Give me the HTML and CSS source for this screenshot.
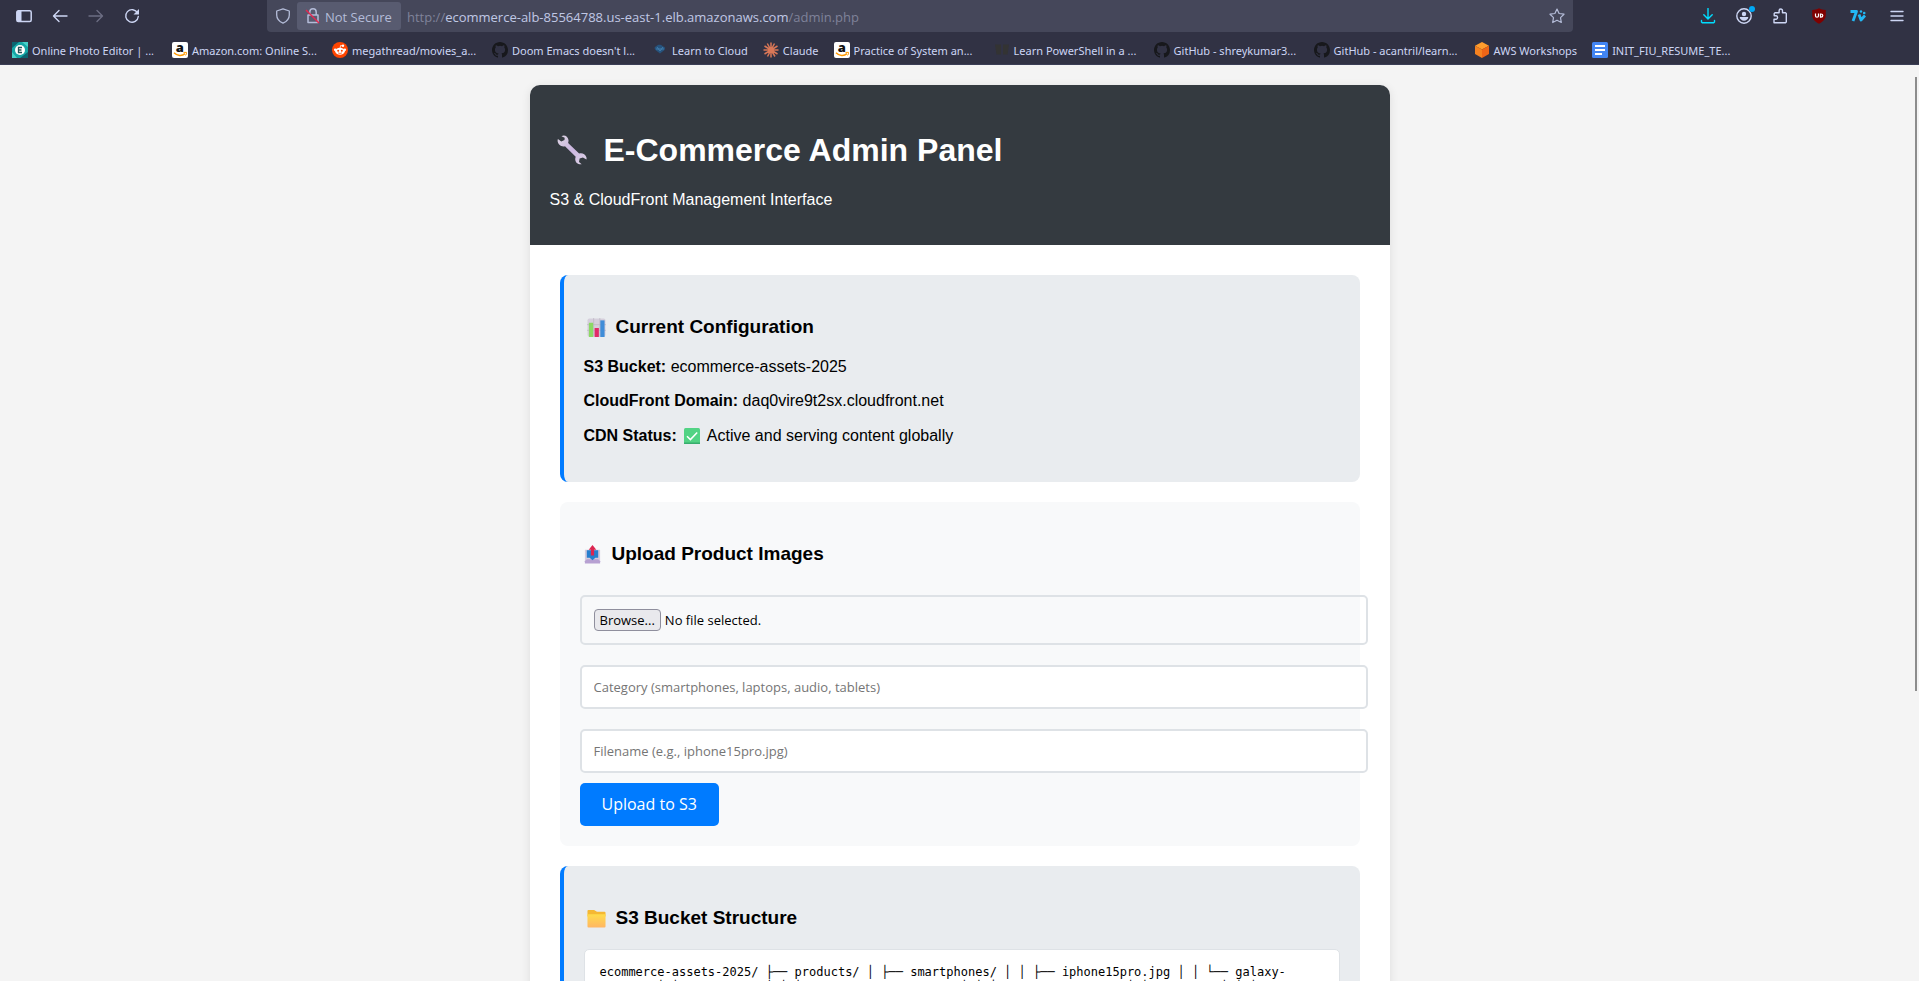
FILE: index.html
```html
<!DOCTYPE html>
<html lang="en">
<head>
<meta charset="utf-8">
<title>E-Commerce Admin Panel</title>
<link rel="stylesheet" href="styles.css">
</head>
<body>
<svg class="defs" aria-hidden="true">
  <defs>
    <symbol id="github" viewBox="0 0 16 16"><path fill="#17181c" d="M8 0C3.58 0 0 3.58 0 8c0 3.54 2.29 6.53 5.47 7.59.4.07.55-.17.55-.38 0-.19-.01-.82-.01-1.49-2.01.37-2.53-.49-2.69-.94-.09-.23-.48-.94-.82-1.13-.28-.15-.68-.52-.01-.53.63-.01 1.08.58 1.23.82.72 1.21 1.87.87 2.33.66.07-.52.28-.87.51-1.07-1.78-.2-3.64-.89-3.64-3.95 0-.87.31-1.59.82-2.15-.08-.2-.36-1.02.08-2.12 0 0 .67-.21 2.2.82a7.42 7.42 0 0 1 4 0c1.53-1.04 2.2-.82 2.2-.82.44 1.1.16 1.92.08 2.12.51.56.82 1.27.82 2.15 0 3.07-1.87 3.75-3.65 3.95.29.25.54.73.54 1.48 0 1.07-.01 1.93-.01 2.2 0 .21.15.46.55.38A8.01 8.01 0 0 0 16 8c0-4.42-3.58-8-8-8z"/></symbol>
    <symbol id="amazon" viewBox="0 0 16 16"><rect width="16" height="16" rx="2" fill="#fff"/><text x="7.7" y="10.2" text-anchor="middle" font-family="Open Sans" font-weight="800" font-size="13" fill="#111">a</text><path d="M2 10.800c3.200 3.200 8 3.500 11 .8" fill="none" stroke="#f90" stroke-width="1.500"/><path d="M11.500 10.400h3c.2 1-.2 2.200-.9 3" fill="none" stroke="#f90"/></symbol>
  </defs>
</svg>
<header class="browser">
  <nav class="toolbar" aria-label="Browser toolbar">
    <div class="nav-buttons">
      <button class="icon-button" aria-label="Sidebar"><svg viewBox="0 0 16 16"><rect x=".8" y="2.800" width="14.400" height="10.800" rx="1.500" fill="none" stroke="currentColor" stroke-width="1.500"/><path d="M1 3h4.500v10.500H1z" fill="currentColor"/></svg></button>
      <button class="icon-button" aria-label="Back"><svg viewBox="0 0 16 16"><path d="M15 8H2M7 2.500 1.500 8 7 13.500" class="line"/></svg></button>
      <button class="icon-button dim" aria-label="Forward"><svg viewBox="0 0 16 16"><path d="M1 8h13M9 2.500 14.500 8 9 13.500" class="line"/></svg></button>
      <button class="icon-button" aria-label="Reload"><svg viewBox="0 0 16 16"><path d="M13.600 5A6.300 6.300 0 1 0 14.300 8.500" class="line"/><path d="M15 1v5.500H9.500z" fill="currentColor"/></svg></button>
    </div>
    <div class="address">
      <button class="icon-button shield" aria-label="Tracking protection"><svg viewBox="0 0 16 16"><path d="M8 .8 14.300 3v4c0 4-2.500 6.500-6.300 8.200C4.200 13.500 1.700 11 1.700 7V3z" fill="none" stroke="currentColor" stroke-width="1.300" stroke-linejoin="round"/></svg></button>
      <button class="security"><svg viewBox="0 0 16 16"><path d="M3 7h10v7.500H3zM4.800 7V4a3.200 3.200 0 0 1 6.400 0v3" fill="none" stroke="currentColor" stroke-width="1.500" stroke-linejoin="round"/><path d="m1 2 13 13" stroke="#e22850" stroke-width="1.500"/></svg><span>Not Secure</span></button>
      <a class="url" href="#"><span>http://</span>ecommerce-alb-85564788.us-east-1.elb.amazonaws.com<span>/admin.php</span></a>
      <button class="icon-button star" aria-label="Bookmark this page"><svg viewBox="0 0 16 16"><path d="m8 1 2.100 4.500 4.900.7-3.500 3.400.8 4.900L8 12.200l-4.300 2.300.8-4.900L1 6.200l4.900-.7z" fill="none" stroke="currentColor" stroke-width="1.200" stroke-linejoin="round"/></svg></button>
    </div>
    <div class="tools">
      <button class="icon-button download" aria-label="Downloads"><svg viewBox="0 0 16 16"><path d="M8 .5v10M3.800 6.800 8 11l4.200-4.200M1.500 12.500V14l.8.800h11.400l.8-.8v-1.500" class="line"/></svg></button>
      <button class="icon-button account" aria-label="Account"><svg viewBox="0 0 16 16"><circle cx="8" cy="8" r="7.200" class="line"/><circle cx="8" cy="6" r="2.200" fill="currentColor"/><path d="M3.700 9h8.600c0 2-2 3.700-4.300 3.700S3.700 11 3.700 9z" fill="currentColor"/></svg><i class="dot"></i></button>
      <button class="icon-button" aria-label="Extensions"><svg viewBox="0 0 16 16"><path d="M2 14.800h11.500l.8-.8V5.500l-.8-.7h-3V2.700a1.700 1.700 0 0 0-3.400 0v2.100H3l-.8.700v2.300h2a1.800 1.800 0 0 1 0 3.500H2z" class="line"/></svg></button>
      <button class="icon-button addon" aria-label="uBlock"><svg viewBox="0 0 16 16"><path d="M8 .2c2 1 4 1.700 6.800 1.800v4.700c0 4.200-2.500 6.800-6.800 9C3.700 13.500 1.200 10.900 1.200 6.700V2C4 1.900 6 1.200 8 .2z" fill="#800000"/><path d="M4.500 5.500V8c0 1.600 3 1.600 3 0V5.500M9.500 6h.5c2.400 0 2.400 3.200 0 3.200h-.5z" fill="none" stroke="#fff" stroke-width="1.200"/></svg></button>
      <button class="icon-button addon" aria-label="7v extension"><svg viewBox="0 0 16 16"><path d="M.5 3.500h6L3 13M9 6.500l2 5.500 4-4.500" fill="none" stroke="#22b8f5" stroke-width="2.800" stroke-linejoin="round"/><circle cx="11" cy="3.500" r="1.200" fill="#22b8f5"/><circle cx="14.200" cy="5" r="1.300" fill="#22b8f5"/></svg></button>
      <button class="icon-button addon" aria-label="Menu"><svg viewBox="0 0 16 16"><path d="M2 3.500h12M2 8h12M2 12.500h12" class="line"/></svg></button>
    </div>
  </nav>
  <nav class="bookmarks" aria-label="Bookmarks">
    <a class="wide" href="#"><svg viewBox="0 0 16 16"><path fill="#16a6a6" d="M0 0h16v16H0z"/><path fill="#0c6470" d="M0 0h7L0 6zM16 16H8l8-6z"/><path fill="#46d0c9" d="M16 0v5l-6-5zM0 16v-6l5 6z"/><circle cx="8" cy="8" r="5" fill="#fff"/><path d="M10 5.500H6.500v5H10M6.500 8h3" fill="none" stroke="#28545a" stroke-width="1.300"/></svg><span>Online Photo Editor | ...</span></a>
    <a class="wide" href="#"><svg><use href="#amazon"/></svg><span>Amazon.com: Online S...</span></a>
    <a class="wide" href="#"><svg viewBox="0 0 16 16"><circle cx="8" cy="8" r="8" fill="#ff4500"/><ellipse cx="8" cy="9.300" rx="4.800" ry="3.500" fill="#fff"/><circle cx="3.200" cy="7.700" r="1.300" fill="#fff"/><circle cx="12.800" cy="7.700" r="1.300" fill="#fff"/><circle cx="11" cy="3.800" r="1.200" fill="#fff"/><path d="M8 6.500 8.600 3.500 11 4" fill="none" stroke="#fff" stroke-width=".8"/><circle cx="6.200" cy="8.700" r="1" fill="#ff4500"/><circle cx="9.800" cy="8.700" r="1" fill="#ff4500"/><path d="M6 10.800c1.200.8 2.800.8 4 0" fill="none" stroke="#ff4500" stroke-width=".7"/></svg><span>megathread/movies_a...</span></a>
    <a class="wide" href="#"><svg><use href="#github"/></svg><span>Doom Emacs doesn't l...</span></a>
    <a href="#"><svg viewBox="0 0 16 16"><path d="M4 4.500c1.500-2.500 5.500-2.500 7 0 2 0 2.700 2 1.500 3.500L8 11.500 3.500 8C2 6.500 2.500 4.500 4 4.500z" fill="#26537e"/><path d="m5 5 3 4 3-4M4 7h8" fill="none" stroke="#4685b5" stroke-width=".8"/></svg><span>Learn to Cloud</span></a>
    <a href="#"><svg viewBox="0 0 16 16"><path d="M8 8V.5M8 8l3.500-6.500M8 8l6.500-4M8 8h7.500M8 8l6.500 4M8 8l4 6.500M8 8v7.500M8 8l-3.500 6.500M8 8l-6.500 4M8 8H.5M8 8 1.500 4M8 8 4.300 1.500" stroke="#d97757" stroke-width="1.500"/></svg><span>Claude</span></a>
    <a class="wide" href="#"><svg><use href="#amazon"/></svg><span>Practice of System an...</span></a>
    <a class="wide" href="#"><svg viewBox="0 0 16 16"><path d="M1 2.500h6v10H2.500zM9 2.500h6l-1.500 10H9z" fill="#333333"/></svg><span>Learn PowerShell in a ...</span></a>
    <a class="wide" href="#"><svg><use href="#github"/></svg><span>GitHub - shreykumar3...</span></a>
    <a class="wide" href="#"><svg><use href="#github"/></svg><span>GitHub - acantril/learn...</span></a>
    <a href="#"><svg viewBox="0 0 16 16"><path fill="#ff9d2d" d="m8 0 7 3.800L8 7.600 1 3.800z"/><path fill="#f58220" d="m1 3.800 7 3.800V16l-7-4z"/><path fill="#ee6517" d="m15 3.800-7 3.800V16l7-4z"/></svg><span>AWS Workshops</span></a>
    <a href="#"><svg viewBox="0 0 16 16"><rect width="16" height="16" rx="1.500" fill="#4285f4"/><path d="M3 4h10M3 8h10M3 12h7" stroke="#fff" stroke-width="1.800"/></svg><span>INIT_FIU_RESUME_TE...</span></a>
  </nav>
</header>
<div class="page">
  <main class="container">
    <header class="banner">
      <h1><svg class="wrench" viewBox="0 0 30 30" aria-hidden="true"><defs><linearGradient id="steel" x1="0" y1="0" x2="1" y2="1"><stop offset="0" stop-color="#ddd5e3"/><stop offset=".5" stop-color="#cbb6e0"/><stop offset="1" stop-color="#ddd3e6"/></linearGradient></defs><path fill="url(#steel)" d="M4.500 1.200C7.500-.5 11 1.600 11.500 5c.1 1.200-.1 2-.4 2.900l11 10.600c3-1 6.200.6 7.200 3.500.3.900.3 1.500.2 2.400l-3.600-2-3.300 1.200-.6 3.400 2.700 2.300c-3.500.5-6.500-1.800-6.500-5.100 0-1 .2-1.700.5-2.500L8 11.200C4.500 12.300.8 9.500.6 6c0-.8.1-1.400.3-2l3.400 2.600L7.500 5 7.700 2.700z"/></svg>E-Commerce Admin Panel</h1>
      <p>S3 &amp; CloudFront Management Interface</p>
    </header>
    <div class="content">
      <section class="card info">
        <h3><svg viewBox="0 0 20 20" aria-hidden="true"><rect x=".5" y=".5" width="19" height="19" rx="2" fill="#d5cfdc"/><path d="M0 7h20M0 13h20M7 0v20M13.500 0v20" stroke="#bbb3c3" stroke-width=".7"/><path fill="#8bd965" d="M2 5h4.500v15H2z"/><path fill="#e12a68" d="M8 10.500h4.500V20H8z"/><path fill="#3f8dd8" d="M14 2.500h4.500V20H14z"/></svg>Current Configuration</h3>
        <p><strong>S3 Bucket:</strong> ecommerce-assets-2025</p>
        <p><strong>CloudFront Domain:</strong> daq0vire9t2sx.cloudfront.net</p>
        <p class="status"><strong>CDN Status:</strong> <svg viewBox="0 0 16 16" aria-hidden="true"><rect width="16" height="16" rx="1.500" fill="#52d384"/><path d="M0 14.500h16V16H0z" fill="#37ad6d"/><path d="m3 8.200 3.400 3.400L13.200 4.500" fill="none" stroke="#fff" stroke-width="1.500"/></svg> Active and serving content globally</p>
      </section>
      <section class="card upload">
        <h3><svg viewBox="0 0 20 20" aria-hidden="true"><path d="M2 5h16v12H2z" fill="#d4cbdc"/><path d="m2 17 2-2h12l2 2v2.500H2z" fill="#b7a1d2"/><path d="M4 5.500h12v8h-3L10 16l-3-2.500H4z" fill="#267fce"/><path d="m10 0 4 5h-2.300v6H8.300V5H6z" fill="#dc254f"/></svg>Upload Product Images</h3>
        <form>
          <label class="field file"><input type="file" aria-label="Product image"><span class="browse">Browse...</span>No file selected.</label>
          <input class="field" type="text" aria-label="Category" placeholder="Category (smartphones, laptops, audio, tablets)">
          <input class="field" type="text" aria-label="Filename" placeholder="Filename (e.g., iphone15pro.jpg)">
          <button class="submit" type="button">Upload to S3</button>
        </form>
      </section>
      <section class="card info">
        <h3><svg viewBox="0 0 20 20" aria-hidden="true"><defs><linearGradient id="folder" x2="0" y2="1"><stop stop-color="#ffdc4a"/><stop offset="1" stop-color="#ffb663"/></linearGradient></defs><path d="M.5 2q0-1 1-1h6l3 2h8q1 0 1 1v4H.5z" fill="#f5b833"/><path d="M.5 5.500h19v13q0 1-1 1h-17q-1 0-1-1z" fill="url(#folder)"/></svg>S3 Bucket Structure</h3>
        <div class="tree">ecommerce-assets-2025/ ├── products/ │ ├── smartphones/ │ │ ├── iphone15pro.jpg │ │ └── galaxy-s24.jpg │ ├── laptops/ │ │ ├── macbook-pro-m3.jpg │ │ └── dell-xps13.jpg │ ├── audio/ │ │ ├──</div>
      </section>
    </div>
  </main>
  <div class="scrollbar"></div>
</div>
</body>
</html>
```

FILE: styles.css
```css
* { box-sizing: border-box; }
body {
  margin: 0;
  height: 100vh;
  display: flex;
  flex-direction: column;
  overflow: hidden;
  background: #f4f4f4;
  color: #000;
  font: 16px/18px "Liberation Sans", Arial, sans-serif;
}
.defs { position: absolute; width: 0; height: 0; }
button { font: inherit; border: 0; padding: 0; color: inherit; background: none; }
a { color: inherit; text-decoration: none; }

/* Browser chrome */
.browser {
  flex: none;
  background: #313244;
  color: #cdd6f4;
  border-bottom: 1px solid #3b3e56;
  font-family: "Noto Sans", "Open Sans", sans-serif;
}
.toolbar { display: flex; height: 32px; }
.nav-buttons { display: flex; gap: 20px; padding-left: 16px; width: 267px; }
.icon-button { display: flex; align-items: center; position: relative; }
.icon-button svg { width: 16px; height: 16px; }
.line { fill: none; stroke: currentColor; stroke-width: 1.4; stroke-linecap: round; stroke-linejoin: round; }
.dim { color: #6b6d82; }
.address {
  flex: 1;
  display: flex;
  align-items: center;
  padding: 0 8px;
  background: #45475a;
  border-radius: 0 0 4px 4px;
  font-family: "Open Sans", "Noto Sans", sans-serif;
}
.shield { color: #b4bcd8; margin-right: 6px; }
.security {
  display: flex;
  align-items: center;
  gap: 4px;
  width: 104px;
  height: 28px;
  padding-left: 8px;
  border-radius: 3px;
  background: #585b70;
  color: #b4bcd8;
  font-size: 13px;
  white-space: nowrap;
}
.security svg { width: 16px; height: 16px; }
.security span { padding-top: 2px; }
.url { flex: 1; padding: 2px 0 0 6px; font-size: 13px; color: #c0c8e5; }
.url span { color: #7f8299; }
.star { color: #b4bcd8; }
.tools { display: flex; justify-content: flex-end; gap: 20px; width: 346px; padding-right: 14px; }
.addon { margin-left: 3px; }
.download { color: #00ddff; }
.dot { position: absolute; top: 6px; right: -3px; width: 6px; height: 6px; border-radius: 50%; background: #00a8f5; }
.bookmarks { display: flex; height: 32px; padding-left: 12px; align-items: center; font-size: 11px; }
.bookmarks a { display: flex; align-items: center; gap: 4px; padding: 4px 15px 0 0; height: 32px; white-space: nowrap; }
.bookmarks span { padding-top: 2px; }
.bookmarks .wide { width: 160px; padding-right: 0; }
.bookmarks svg { width: 16px; height: 16px; flex: none; }

/* Page */
.page { flex: 1; min-height: 0; position: relative; overflow: hidden; padding: 20px; }
.scrollbar { position: absolute; top: 12px; right: 2px; width: 2px; height: 67%; background: #8c8c8c; }
.container {
  max-width: 860px;
  margin: 0 auto;
  background: #fff;
  border-radius: 10px;
  box-shadow: 0 2px 10px rgba(0, 0, 0, .1);
}
.banner { padding: 20px; background: #343a40; color: #fff; border-radius: 10px 10px 0 0; }
h1 { display: flex; align-items: center; gap: 17px; margin: 23px 0 19px; padding-left: 7px; font-size: 32px; line-height: 44px; }
.wrench { width: 30px; height: 30px; }
.banner p { margin: 0 0 16px; }
.content { display: flex; flex-direction: column; gap: 20px; padding: 30px; }
.card { padding: 20px; border-radius: 8px; }
.info { background: #e9ecef; border-left: 4px solid #007bff; }
.upload { background: #f8f9fa; }
h3 { display: flex; align-items: center; gap: 10px; margin: 19px 0 18px; padding-left: 3px; font-size: 19px; line-height: 26px; }
h3 svg { width: 19px; height: 19px; }
.card p { margin: 0 0 16px; }
.card .status { display: flex; align-items: center; gap: 7px; line-height: 20px; }
.status svg { width: 16px; height: 16px; }
form { display: flex; flex-direction: column; align-items: flex-start; }
.field {
  box-sizing: content-box;
  width: 100%;
  height: 16px;
  margin: 10px 0;
  padding: 12px;
  border: 2px solid #dee2e6;
  border-radius: 5px;
  background: #fff;
  color: #000;
  font: 13px/16px "Open Sans", "Noto Sans", sans-serif;
}
.field::placeholder { color: #757575; opacity: 1; }
.file { position: relative; display: flex; align-items: center; gap: 4px; height: 22px; background: none; }
.file input { position: absolute; inset: 0; width: 100%; opacity: 0; }
.browse { padding: 2px 5px; border: 1px solid #8f8f9d; border-radius: 4px; background: #e9e9ed; }
.submit { padding: 12px 22px; border-radius: 5px; background: #007bff; color: #fff; font: 16px/19px "Open Sans", "Noto Sans", sans-serif; }
.tree {
  padding: 15px;
  border: 1px solid #dee2e6;
  border-radius: 5px;
  background: #fff;
  font: 12px/15px "DejaVu Sans Mono", monospace;
}
```
